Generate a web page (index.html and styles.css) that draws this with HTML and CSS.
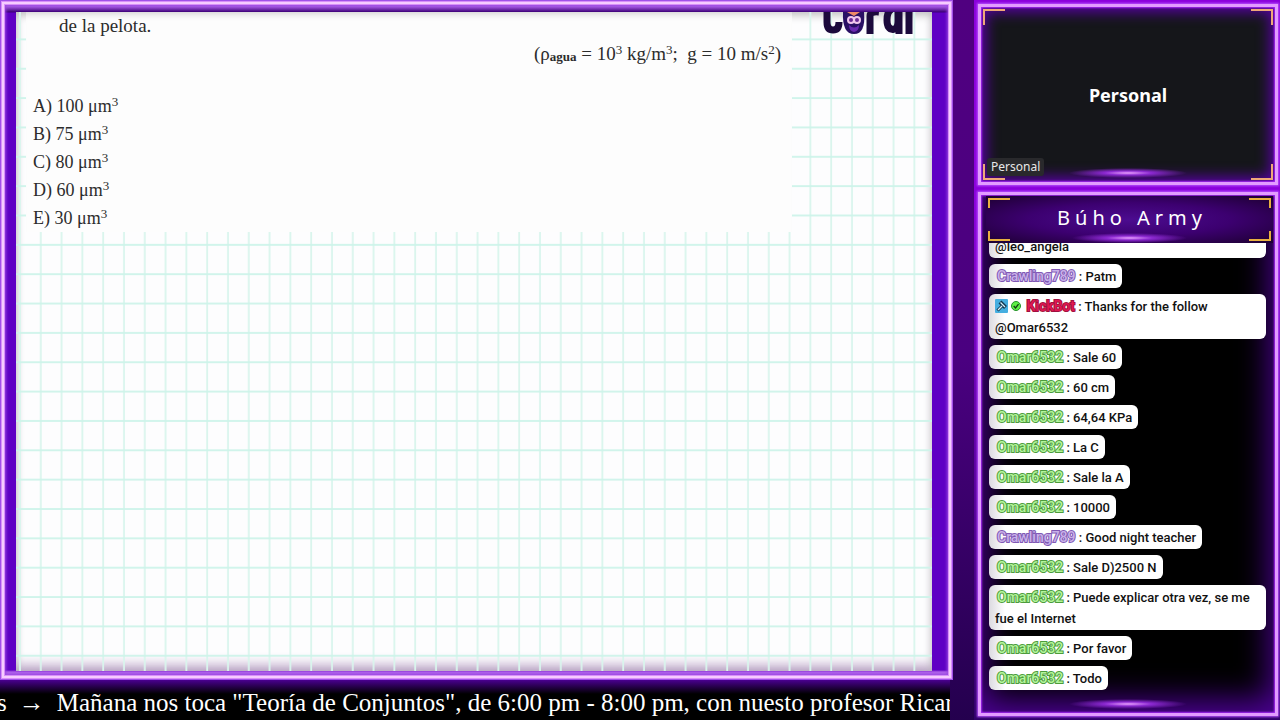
FILE: index.html
```
<!DOCTYPE html>
<html lang="es">
<head>
    <meta charset="UTF-8">
    <title>Búho Army</title>
    <link rel="stylesheet" href="styles.css">
</head>
<body>
    <div class="stream">
        <main class="stage">
            <div class="board-frame">
                <div class="board">
                    <!-- hoja cuadriculada -->
                    <svg class="grid" aria-hidden="true">
                        <defs>
                            <pattern id="squares" x="4.9" y="26.4" width="20.8" height="29.35" patternUnits="userSpaceOnUse">
                                <path d="M19.9 0V29.35" stroke="#d9f5ed" stroke-width="1.8"/>
                                <path d="M0 1H20.8" stroke="#cdf4ea" stroke-width="1.8"/>
                            </pattern>
                        </defs>
                        <rect width="100%" height="100%" fill="url(#squares)"/>
                    </svg>
                    <section class="problem">
                        <p class="statement">de la pelota.</p>
                        <p class="data">(ρ<sub>agua</sub> = 10<sup>3</sup> kg/m<sup>3</sup>;&nbsp; g = 10 m/s<sup>2</sup>)</p>
                        <ul class="options">
                            <li>A) 100 μm<sup>3</sup></li>
                            <li>B) 75 μm<sup>3</sup></li>
                            <li>C) 80 μm<sup>3</sup></li>
                            <li>D) 60 μm<sup>3</sup></li>
                            <li>E) 30 μm<sup>3</sup></li>
                        </ul>
                    </section>
                    <svg class="logo" width="96" height="24" viewBox="0 0 96 24" aria-hidden="true">
                        <g fill="none" stroke="#1c0a3c" stroke-width="7">
                            <path d="M7 0V10Q7 18 13 18Q19 18 19 10"/>
                            <path d="M50 22V4Q50 -1 59 0"/>
                            <path d="M72 -3Q67 -1 67 8Q67 17 73 17.500Q78 17 78 9V-2M79 0V22"/>
                            <path d="M89 0V22"/>
                        </g>
                        <path d="M23 0Q22 22 34 22Q46 22 44 0Z" fill="#2a1064"/>
                        <path d="M27 0H40L34 4Z" fill="#ef8a66"/>
                        <path d="M29 13Q34 18 39 13Q39 19 34 20Q29 19 29 13Z" fill="#6a2ab0"/>
                        <g fill="#6a2a94" stroke="#f0c6ec" stroke-width="2">
                            <circle cx="31" cy="8" r="3"/>
                            <circle cx="37" cy="8" r="3"/>
                        </g>
                    </svg>
                </div>
            </div>
            <div class="ticker">
                <span>s</span>
                <span class="arrow">→</span>
                <p>Mañana nos toca "Teoría de Conjuntos", de 6:00 pm - 8:00 pm, con nuesto profesor Ricard</p>
            </div>
        </main>

        <aside class="side">
            <section class="panel camera">
                <span class="corner tl"></span><span class="corner tr"></span>
                <span class="corner bl"></span><span class="corner br"></span>
                <h2>Personal</h2>
                <span class="tag">Personal</span>
                <span class="flare"></span>
            </section>

            <section class="panel chat">
                <header class="chat-title">
                    <span class="corner tl"></span><span class="corner tr"></span>
                    <span class="corner bl"></span><span class="corner br"></span>
                    <h1>Búho Army</h1>
                    <span class="flare"></span>
                </header>
                <ul class="messages">
                    <li class="full">@leo_angela</li>
                    <li><b class="user violet">Crawling789</b> : Patm</li>
                    <li>
                        <svg class="badge" width="13" height="14" viewBox="0 0 13 14" aria-hidden="true">
                            <rect width="13" height="14" rx="1" fill="#45aee0"/>
                            <path d="M2.500 11.500L7 7" stroke="#12344c" stroke-width="3"/>
                            <path d="M5 3L10.500 8.500" stroke="#12344c" stroke-width="4"/>
                            <path d="M3 11L7 7M5.500 3.500L10 8" stroke="#d5f0ff" stroke-width="1.3"/>
                        </svg>
                        <svg class="badge" width="10" height="14" viewBox="0 0 10 14" aria-hidden="true">
                            <circle cx="5" cy="7" r="4.500" fill="#5cf044" stroke="#24912a"/>
                            <path d="M2.700 7L4.500 9L7.500 5.200" fill="none" stroke="#123c12" stroke-width="1.3"/>
                        </svg>
                        <b class="user crimson">KickBot</b> : Thanks for the follow @Omar6532
                    </li>
                    <li><b class="user green">Omar6532</b> : Sale 60</li>
                    <li><b class="user green">Omar6532</b> : 60 cm</li>
                    <li><b class="user green">Omar6532</b> : 64,64 KPa</li>
                    <li><b class="user green">Omar6532</b> : La C</li>
                    <li><b class="user green">Omar6532</b> : Sale la A</li>
                    <li><b class="user green">Omar6532</b> : 10000</li>
                    <li><b class="user violet">Crawling789</b> : Good night teacher</li>
                    <li><b class="user green">Omar6532</b> : Sale D)2500 N</li>
                    <li><b class="user green">Omar6532</b> : Puede explicar otra vez, se me fue el Internet</li>
                    <li><b class="user green">Omar6532</b> : Por favor</li>
                    <li><b class="user green">Omar6532</b> : Todo</li>
                </ul>
                <span class="flare"></span>
            </section>
        </aside>
    </div>
</body>
</html>
```
FILE: styles.css
```
* {
    box-sizing: border-box;
}
body {
    margin: 0;
    background: #000;
}
h1, h2, p, ul {
    margin: 0;
    padding: 0;
    font-weight: normal;
    list-style: none;
}
.stream {
    display: flex;
    height: 100vh;
    overflow: hidden;
    background: linear-gradient(#500080, #4a0080 50%, #24004e);
}

/* pizarra */
.stage {
    flex: 1;
    min-width: 0;
    display: flex;
    flex-direction: column;
}
.board-frame {
    flex: 1;
    min-height: 0;
    display: flex;
    padding: 12px 21px 9px 16px;
    background: linear-gradient(#b062ea 6px, #3c0078 12px, #5f00c4 13px, #5f00c4 calc(100% - 10px), #b062ea calc(100% - 8px));
    box-shadow: inset 0 0 0 1px #a050e8, inset 0 0 0 2px #d890f8, inset 0 0 0 4px #f6ccff, inset 0 0 0 5px #d890f8, inset 0 0 3px 6px #9a48e0;
}
.board {
    position: relative;
    flex: 1;
    padding-left: 10px;
    background: #fdfdfe;
    box-shadow: inset 0 3px 8px #bbb, inset 0 -12px 14px -8px #a98bb8;
}
.grid {
    position: absolute;
    inset: 0;
    width: 100%;
    height: 100%;
}
.problem {
    position: relative;
    width: 766px;
    height: 220px;
    padding: 0 11px 0 7px;
    background: #fdfdfd;
    box-shadow: inset 0 8px 8px -8px #bbb;
    font: 19px/28px "Liberation Serif", serif;
    color: #2c2c2c;
}
.problem sup, .problem sub {
    font-size: 13px;
    line-height: 0;
}
.problem sup {
    vertical-align: 6px;
}
.problem sub {
    font-weight: bold;
    vertical-align: -1px;
}
.statement {
    padding-left: 26px;
}
.data {
    text-align: right;
}
.options {
    padding-top: 24px;
    font-size: 18px;
}
.logo {
    position: absolute;
    top: 0;
    right: 16px;
}
.ticker {
    display: flex;
    gap: 12px;
    height: 40px;
    margin-right: 3px;
    overflow: hidden;
    background: linear-gradient(#4a0090, #000 14px);
    font: 25px/46px "Liberation Serif", serif;
    color: #fff;
    white-space: nowrap;
}
.ticker span:first-child {
    margin-left: -3px;
}
.ticker .arrow {
    width: 26px;
    font-size: 26px;
}

/* columna derecha */
.side {
    width: 327px;
    display: flex;
    flex-direction: column;
    gap: 7px;
    padding: 4px 2px 4px 25px;
    background: linear-gradient(#8b00dc, #8b00dc 200px, #30006a) no-repeat right / 306px 100%;
}
.panel {
    position: relative;
    border: 3px solid #e29cff;
}
.camera {
    height: 181px;
    display: flex;
    align-items: center;
    justify-content: center;
    background: #15161a;
    box-shadow: 0 0 2px 1px #b850ff, inset 0 0 2px 1px #a828f8, inset 0 0 14px 5px #5a00a8;
}
.camera h2 {
    font: bold 18px/28px "Noto Sans", sans-serif;
    color: #fff;
}
.tag {
    position: absolute;
    left: 6px;
    bottom: 6px;
    padding: 0 4px;
    border-radius: 3px;
    background: #29292c;
    font: 12px/18px "Noto Sans", sans-serif;
    color: #e8e8e8;
}
.corner {
    position: absolute;
    width: 22px;
    height: 16px;
    border: 0 solid #f0a878;
}
.tl {
    top: 2px;
    left: 2px;
    border-width: 2px 0 0 2px;
}
.tr {
    top: 2px;
    right: 2px;
    border-width: 2px 2px 0 0;
}
.bl {
    bottom: 2px;
    left: 2px;
    border-width: 0 0 2px 2px;
}
.br {
    bottom: 2px;
    right: 2px;
    border-width: 0 2px 2px 0;
}
.flare {
    position: absolute;
    bottom: 4px;
    left: 30%;
    width: 40%;
    height: 10px;
    background: radial-gradient(closest-side, #e9a0ff, #8b28d0 40%, transparent);
}
.chat {
    flex: 1;
    min-height: 0;
    display: flex;
    flex-direction: column;
    padding: 1px 2px 23px 5px;
    background: #000;
    box-shadow: 0 0 2px 1px #b850ff, inset 0 0 2px 1px #a828f8, inset 0 -8px 30px 6px #4a0090;
}
.chat-title {
    position: relative;
    height: 47px;
    background: radial-gradient(#4c0c90, #3c0070 50%, #1c0030);
}
.chat-title h1 {
    padding-left: 5px;
    font: 20px/43px "Noto Sans", sans-serif;
    letter-spacing: 5px;
    text-align: center;
    color: #fff;
}
.chat-title .corner {
    height: 10px;
    border-color: #e8b040;
}
.chat-title .flare {
    bottom: 0;
}
.messages {
    flex: 1;
    min-height: 0;
    display: flex;
    flex-direction: column;
    align-items: flex-start;
    justify-content: flex-end;
    gap: 6px;
    margin: 0 7px 0 3px;
    overflow: hidden;
    font: 500 13px/21px Roboto, sans-serif;
    color: #111;
}
.messages li {
    flex: none;
    padding: 2px 6px 1px;
    border-radius: 6px;
    background: linear-gradient(90deg, #dcdae0, #fff 16px);
}
.messages .full {
    width: 100%;
}
/* nombre claro con contorno oscuro */
.user {
    margin-left: 2px;
    font-size: 14px;
    font-weight: 500;
    line-height: 20px;
    paint-order: stroke fill;
    -webkit-text-stroke: 2px;
}
.violet {
    color: #c8b0e8;
    -webkit-text-stroke-color: #8058b4;
}
.green {
    color: #b4f49c;
    -webkit-text-stroke-color: #4c9c3c;
}
.crimson {
    color: #e01850;
    -webkit-text-stroke-color: #a01040;
}
.badge {
    vertical-align: -2px;
}
```
